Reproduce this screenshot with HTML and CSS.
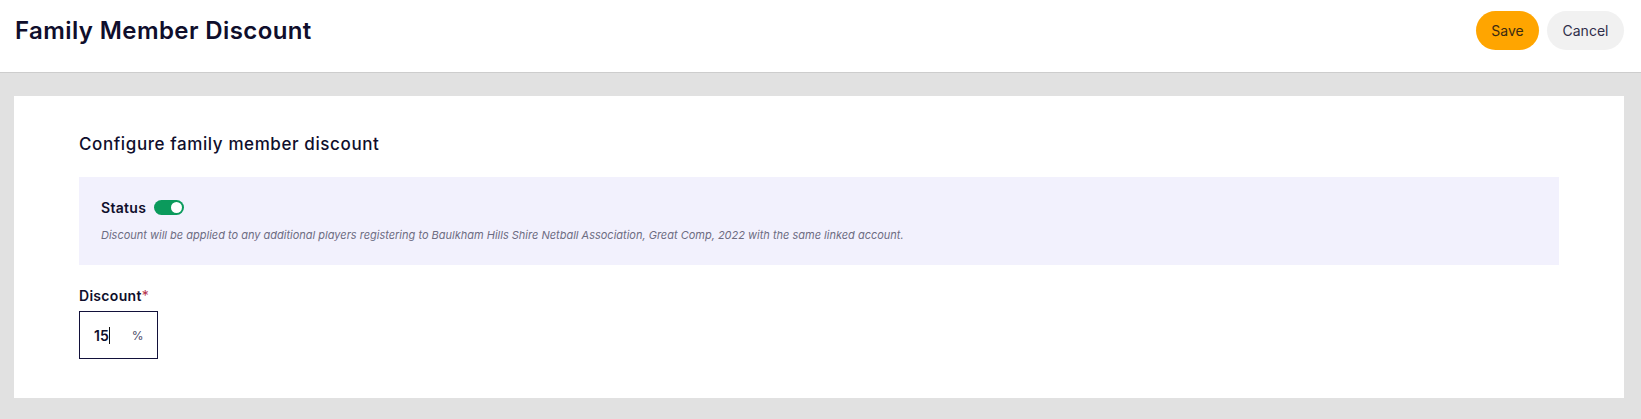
FILE: index.html
```html
<!DOCTYPE html>
<html lang="en">
<head>
    <meta charset="UTF-8">
    <title>Family Member Discount</title>
    <link rel="stylesheet" href="styles.css">
</head>
<body>
<div class="page-header">
    <h1 class="page-title">Family Member Discount</h1>
    <div class="header-actions">
        <button class="btn btn-save">Save</button>
        <button class="btn btn-cancel">Cancel</button>
    </div>
</div>
<div class="page-body">
    <div class="form-card">
        <h2 class="section-title">Configure family member discount</h2>
        <div class="status-panel">
            <div class="status-row">
                <span class="status-label">Status</span>
                <span class="toggle toggle-on"><span class="toggle-knob"></span></span>
            </div>
            <p class="status-note">Discount will be applied to any additional players registering to Baulkham Hills Shire Netball Association, Great Comp, 2022 with the same linked account.</p>
        </div>
        <label class="field-label">Discount<span class="required">*</span></label>
        <div class="percent-input">
            <span class="percent-value">15</span><span class="caret"></span>
            <span class="percent-sign">%</span>
        </div>
    </div>
</div>
</body>
</html>
```

FILE: styles.css
```css
body,h1,h2,p{
    margin: 0;
    padding: 0;
}
body{
    background: #e1e1e1;
    font-family: Inter, "Noto Sans", sans-serif;
    color: #0f0e2c;
}
.page-header{
    display: flex;
    align-items: center;
    justify-content: space-between;
    height: 72px;
    padding: 0 17px 0 15px;
    background: #fff;
    border-bottom: 1px solid #cdcdcd;
}
.page-title{
    font-size: 24px;
    font-weight: 600;
    letter-spacing: 0.4px;
    margin-top: -12px;
}
.header-actions{
    display: flex;
    gap: 8px;
    margin-top: -11px;
}
.btn{
    height: 39px;
    border: none;
    border-radius: 20px;
    font-family: Inter, "Noto Sans", sans-serif;
    font-size: 14px;
    cursor: pointer;
}
.btn-save{
    width: 63px;
    background: #ffa500;
    color: #3b2a12;
}
.btn-cancel{
    width: 77px;
    background: #f1f1f1;
    color: #2f2e4a;
}
.page-body{
    padding: 23px 17px 21px 14px;
}
.form-card{
    background: #fff;
    height: 302px;
    box-sizing: border-box;
    padding: 38px 65px 0 65px;
}
.section-title{
    font-size: 17px;
    font-weight: 500;
    letter-spacing: 0.6px;
    line-height: 20px;
    margin-bottom: 23px;
}
.status-panel{
    background: #f2f1fd;
    height: 88px;
    box-sizing: border-box;
    padding: 22px 22px 0 22px;
}
.status-row{
    display: flex;
    align-items: center;
    gap: 8px;
}
.status-label{
    font-size: 14px;
    font-weight: 600;
    letter-spacing: 0.3px;
}
.toggle{
    position: relative;
    display: inline-block;
    width: 30px;
    height: 15px;
    border-radius: 8px;
    background: #0b9a5c;
}
.toggle-knob{
    position: absolute;
    top: 2px;
    right: 2px;
    width: 11px;
    height: 11px;
    border-radius: 50%;
    background: #fff;
}
.status-note{
    margin-top: 12px;
    font-size: 11px;
    font-style: italic;
    color: #6d6c82;
}
.field-label{
    display: block;
    margin-top: 22px;
    font-size: 14px;
    font-weight: 600;
    letter-spacing: 0.3px;
}
.required{
    color: #b4334a;
    font-weight: 400;
}
.percent-input{
    display: flex;
    align-items: center;
    width: 79px;
    height: 48px;
    margin-top: 7px;
    box-sizing: border-box;
    border: 1px solid #12113a;
    padding-left: 14px;
}
.percent-value{
    font-size: 14px;
    font-weight: 600;
}
.caret{
    display: inline-block;
    width: 1px;
    height: 17px;
    background: #111;
}
.percent-sign{
    margin-left: 22px;
    font-size: 12px;
    color: #4a4a6a;
}
```
